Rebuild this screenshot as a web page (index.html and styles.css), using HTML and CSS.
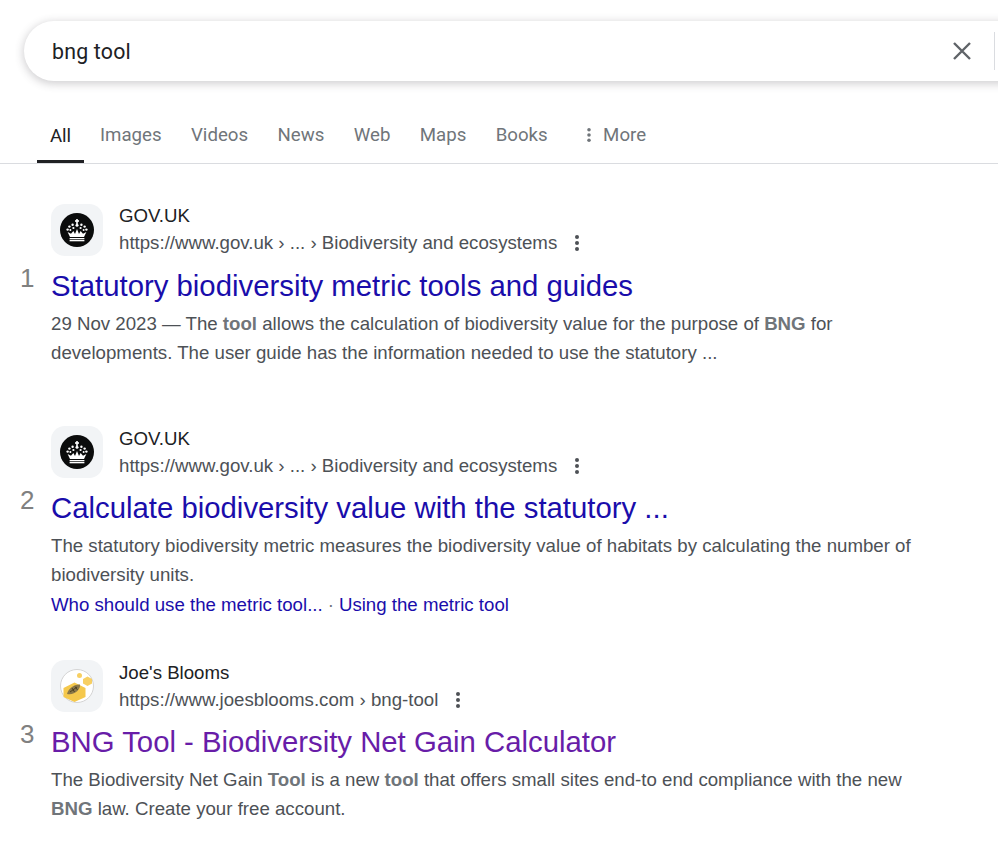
FILE: index.html
```html
<!DOCTYPE html>
<html lang="en">
<head>
<meta charset="utf-8">
<title>bng tool - Search</title>
<link rel="stylesheet" href="styles.css">
</head>
<body>
<svg class="defs" width="0" height="0" aria-hidden="true">
  <symbol id="crown" viewBox="0 0 34 34">
    <circle cx="17" cy="17" r="17" fill="#0b0c0c"/>
    <g fill="#fff">
      <rect x="16.2" y="6" width="1.6" height="5"/><rect x="15" y="7.2" width="4" height="1.6"/>
      <circle cx="17" cy="12.2" r="1.5"/>
      <circle cx="12.6" cy="11.8" r="1.2"/><circle cx="21.4" cy="11.8" r="1.2"/>
      <circle cx="9.4" cy="13.6" r="1.2"/><circle cx="24.6" cy="13.6" r="1.2"/>
      <circle cx="7.6" cy="16.6" r="1.2"/><circle cx="26.4" cy="16.6" r="1.2"/>
      <circle cx="13.4" cy="15" r="1.1"/><circle cx="20.6" cy="15" r="1.1"/>
      <circle cx="10.4" cy="17" r="1"/><circle cx="23.6" cy="17" r="1"/>
      <path d="M7.6 19 L10 24 H24 L26.4 19 L23 20.8 L20.6 18 L19 21 L17 16 L15 21 L13.4 18 L11 20.8 Z"/>
      <rect x="9.6" y="25" width="14.8" height="1.3"/>
      <rect x="9.6" y="27" width="14.8" height="1.3"/>
    </g>
  </symbol>
  <symbol id="dots" viewBox="0 0 4 18">
    <circle cx="2" cy="3" r="2"/><circle cx="2" cy="9" r="2"/><circle cx="2" cy="15" r="2"/>
  </symbol>
</svg>

<header class="search">
  <div class="search-box">
    <span class="query">bng tool</span>
    <svg class="clear" viewBox="0 0 18 18" aria-hidden="true"><path d="M1 1 L17 17 M17 1 L1 17"/></svg>
    <span class="divider"></span>
  </div>
</header>

<nav class="tabs">
  <a class="tab active">All</a>
  <a class="tab">Images</a>
  <a class="tab">Videos</a>
  <a class="tab">News</a>
  <a class="tab">Web</a>
  <a class="tab">Maps</a>
  <a class="tab">Books</a>
  <a class="tab more"><svg class="more-dots"><use href="#dots"/></svg>More</a>
</nav>

<main class="results">
  <article class="result result-one">
    <span class="rank">1</span>
    <div class="source">
      <span class="favicon"><svg class="fav-img"><use href="#crown"/></svg></span>
      <div class="source-text">
        <div class="site">GOV.UK</div>
        <div class="url"><span>https://www.gov.uk › ... › Biodiversity and ecosystems</span><svg class="menu"><use href="#dots"/></svg></div>
      </div>
    </div>
    <h3 class="title">Statutory biodiversity metric tools and guides</h3>
    <p class="snippet">29 Nov 2023 — The <b>tool</b> allows the calculation of biodiversity value for the purpose of <b>BNG</b> for<br>developments. The user guide has the information needed to use the statutory ...</p>
  </article>

  <article class="result result-two">
    <span class="rank">2</span>
    <div class="source">
      <span class="favicon"><svg class="fav-img"><use href="#crown"/></svg></span>
      <div class="source-text">
        <div class="site">GOV.UK</div>
        <div class="url"><span>https://www.gov.uk › ... › Biodiversity and ecosystems</span><svg class="menu"><use href="#dots"/></svg></div>
      </div>
    </div>
    <h3 class="title">Calculate biodiversity value with the statutory ...</h3>
    <p class="snippet">The statutory biodiversity metric measures the biodiversity value of habitats by calculating the number of<br>biodiversity units.</p>
    <div class="sitelinks"><a>Who should use the metric tool...</a><span class="sep">·</span><a>Using the metric tool</a></div>
  </article>

  <article class="result result-three">
    <span class="rank">3</span>
    <div class="source">
      <span class="favicon">
        <svg class="fav-img" viewBox="0 0 34 34" aria-hidden="true">
          <circle cx="17" cy="17" r="16.5" fill="#fff" stroke="#d4d4d4"/>
          <path d="M14.5 13.5 L25.5 19 V28 L14.5 33 L3.5 28 V19 Z" fill="#f5c84c"/>
          <path d="M27.5 7.5 L32 10 V14.5 L27.5 17 L23 14.5 V10 Z" fill="#f7cf62"/>
          <circle cx="19.5" cy="6.5" r="2.5" fill="#f7cf62"/>
          <path d="M7 25 C8 20 14 15 20 15.5 C21 20 14 27 7 25 Z" fill="#8a7748"/>
          <path d="M10 23 L17 18 M12 19 L14.5 23 M15 17.5 L17.5 21" stroke="#3f3518" stroke-width=".8" fill="none"/>
        </svg>
      </span>
      <div class="source-text">
        <div class="site">Joe's Blooms</div>
        <div class="url"><span>https://www.joesblooms.com › bng-tool</span><svg class="menu"><use href="#dots"/></svg></div>
      </div>
    </div>
    <h3 class="title visited">BNG Tool - Biodiversity Net Gain Calculator</h3>
    <p class="snippet">The Biodiversity Net Gain <b>Tool</b> is a new <b>tool</b> that offers small sites end-to end compliance with the new<br><b>BNG</b> law. Create your free account.</p>
  </article>
</main>
</body>
</html>
```

FILE: styles.css
```css
* { box-sizing: border-box; }
html, body { margin: 0; padding: 0; }
body {
  width: 998px;
  height: 842px;
  overflow: hidden;
  background: #fff;
  font-family: "Liberation Sans", Arial, sans-serif;
  color: #4d5156;
}
.defs { position: absolute; }

.search { padding: 21px 0 0 24px; height: 106px; }
.search-box {
  display: flex;
  align-items: center;
  width: 1000px;
  height: 60px;
  padding-left: 28px;
  border-radius: 30px 0 0 30px;
  background: #fff;
  box-shadow: 0 2px 8px 1px rgba(64, 60, 67, 0.24);
}
.query {
  font-family: Roboto, sans-serif;
  font-size: 21.33px;
  letter-spacing: .2px;
  color: #202124;
  flex: 1;
}
.clear { width: 18px; height: 18px; margin-right: 23px; }
.clear path { stroke: #5f6368; stroke-width: 2.4; fill: none; }
.divider { width: 1px; height: 38px; background: #dadce0; margin-right: 29px; }

.tabs {
  display: flex;
  height: 58px;
  padding-left: 37px;
  border-bottom: 1px solid #dadce0;
  font-family: Roboto, sans-serif;
  font-size: 18.67px;
  color: #70757a;
}
.tab { display: flex; align-items: flex-start; padding-top: 18px; margin-right: 29.4px; line-height: 22px; }
.tab.active {
  width: 47px;
  justify-content: center;
  margin-right: 16px;
  padding-top: 19px;
  color: #202124;
  border-bottom: 3px solid #202124;
}
.tab.more { margin-left: 10px; }
.more-dots { width: 4px; height: 16px; margin: 3px 12px 0 0; fill: #70757a; }

.results { padding: 0 0 0 51px; }
.result { position: relative; }
.result-one { padding-top: 40px; height: 222px; }
.result-two { padding-top: 40px; height: 234px; }
.result-three { padding-top: 40px; }
.rank {
  position: absolute;
  left: -31px;
  top: 99px;
  font-size: 26px;
  line-height: 30px;
  color: #808080;
}
.source { display: flex; align-items: center; height: 52px; }
.favicon {
  display: flex;
  align-items: center;
  justify-content: center;
  width: 52px;
  height: 52px;
  margin-right: 16px;
  border-radius: 14px;
  background: #f2f4f6;
}
.fav-img { width: 34px; height: 34px; }
.source-text { display: flex; flex-direction: column; padding-top: 4px; }
.result-one .source-text { padding-top: 2px; }
.site { font-size: 18.67px; line-height: 24px; color: #202124; }
.url { display: flex; align-items: center; font-size: 18.67px; line-height: 30px; color: #4d5156; }
.menu { width: 4px; height: 18px; margin-left: 18px; fill: #4d5156; }
.title {
  margin: 12px 0 0;
  font-size: 29.33px;
  font-weight: 400;
  line-height: 36px;
  color: #1a0dab;
}
.title.visited { color: #681da8; }
.snippet {
  margin: 5px 0 0;
  font-size: 18.67px;
  line-height: 29px;
  color: #4d5156;
}
.snippet b { color: #70757a; font-weight: 700; }
.sitelinks { font-size: 18.67px; line-height: 29px; padding-top: 1px; color: #1a0dab; }
.sep { margin: 0 5px; color: #70757a; }
```
